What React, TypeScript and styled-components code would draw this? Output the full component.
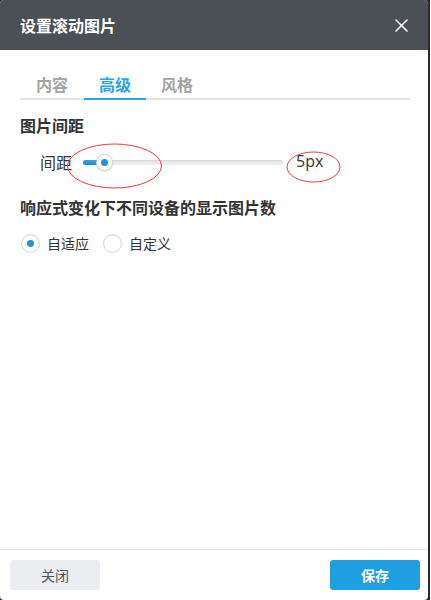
import React from "react";
import styled, { createGlobalStyle } from "styled-components";

const Global = createGlobalStyle`
  html, body { margin: 0; padding: 0; background: #ffffff; }
  body { font-family: "Noto Sans CJK SC", "Noto Sans", sans-serif; }
  * { box-sizing: border-box; }
`;

const Frame = styled.div`
  width: 430px;
  height: 600px;
  display: flex;
  background: #2e2a27;
  position: relative;
`;

const Dialog = styled.div`
  width: 428px;
  height: 600px;
  display: flex;
  flex-direction: column;
  background: #ffffff;
  border-radius: 4px;
  overflow: hidden;
`;

const Header = styled.div`
  height: 50px;
  flex: none;
  background: #4b4f56;
  display: flex;
  align-items: center;
  justify-content: space-between;
  padding: 0 20px 0 20px;
`;

const Title = styled.div`
  color: #ffffff;
  font-size: 16px;
  font-weight: 700;
  line-height: 20px;
`;

const CloseBtn = styled.button`
  width: 14px;
  height: 14px;
  padding: 0;
  border: 0;
  background: transparent;
  display: flex;
  align-items: center;
  justify-content: center;
  cursor: pointer;
`;

const Body = styled.div`
  flex: 1;
  padding: 20px 18px 0 20px;
  display: flex;
  flex-direction: column;
`;

const TabBar = styled.div`
  display: flex;
  border-bottom: 2px solid #e4e4e4;
  height: 30px;
`;

const Tab = styled.div<{ $active?: boolean }>`
  padding: 0 15px;
  height: 30px;
  line-height: 28px;
  font-size: 16px;
  font-weight: 700;
  color: ${(p) => (p.$active ? "#2aa3e4" : "#a3a3a3")};
  border-bottom: 2px solid ${(p) => (p.$active ? "#2aa3e4" : "transparent")};
  margin-bottom: -2px;

  &:first-child {
    margin-left: 2px;
    padding-left: 14px;
    padding-right: 16px;
  }
`;

const SectionTitle = styled.div<{ $mt: number }>`
  margin-top: ${(p) => p.$mt}px;
  font-size: 16px;
  font-weight: 700;
  line-height: 20px;
  color: #333333;
`;

const SliderRow = styled.div`
  margin-top: 12px;
  height: 30px;
  display: flex;
  align-items: center;
  padding-left: 20px;
`;

const Label = styled.div`
  font-size: 16px;
  color: #333333;
  line-height: 20px;
  width: 43px;
`;

const Track = styled.div`
  position: relative;
  width: 200px;
  height: 5px;
  border-radius: 3px;
  background: linear-gradient(#e2e2e2, #f0f0f0);
  box-shadow: inset 0 1px 1px rgba(0, 0, 0, 0.06);
`;

const Fill = styled.div`
  position: absolute;
  left: 0;
  top: 0;
  bottom: 0;
  border-radius: 3px;
  background: linear-gradient(#3aa6e6, #1a8fd6);
`;

const Thumb = styled.div`
  position: absolute;
  top: 50%;
  width: 17px;
  height: 17px;
  margin-left: -8px;
  margin-top: -8px;
  border-radius: 50%;
  background: #ffffff;
  border: 1px solid #d4d4d4;
  box-shadow: 0 1px 2px rgba(0, 0, 0, 0.12);
  display: flex;
  align-items: center;
  justify-content: center;

  &::after {
    content: "";
    width: 7px;
    height: 7px;
    border-radius: 50%;
    background: #1e94dc;
  }
`;

const Value = styled.div`
  margin-left: 13px;
  font-family: "Open Sans", "Noto Sans", sans-serif;
  font-size: 16px;
  color: #333333;
  line-height: 20px;
  margin-top: -2px;
`;

const RadioRow = styled.div`
  margin-top: 16px;
  height: 20px;
  display: flex;
  align-items: center;
  padding-left: 1px;
`;

const RadioItem = styled.label`
  display: flex;
  align-items: center;
  gap: 7px;
  margin-right: 14px;
  font-size: 14px;
  color: #333333;
`;

const RadioCircle = styled.span<{ $checked?: boolean }>`
  width: 19px;
  height: 19px;
  border-radius: 50%;
  border: 1px solid #d6d6d6;
  background: #ffffff;
  box-shadow: inset 0 1px 2px rgba(0, 0, 0, 0.06);
  display: flex;
  align-items: center;
  justify-content: center;

  &::after {
    content: "";
    width: 7px;
    height: 7px;
    border-radius: 50%;
    background: ${(p) => (p.$checked ? "#1e94dc" : "transparent")};
  }
`;

const Footer = styled.div`
  height: 51px;
  flex: none;
  border-top: 1px solid #e6e6e6;
  display: flex;
  align-items: center;
  justify-content: space-between;
  padding: 0 8px 0 10px;
`;

const Button = styled.button<{ $primary?: boolean }>`
  width: 90px;
  height: 30px;
  border: 0;
  border-radius: 3px;
  font-family: "Noto Sans CJK SC", "Noto Sans", sans-serif;
  font-size: 14px;
  font-weight: ${(p) => (p.$primary ? 700 : 400)};
  color: ${(p) => (p.$primary ? "#ffffff" : "#555555")};
  background: ${(p) => (p.$primary ? "#1f9fe1" : "#ecedf1")};
  cursor: pointer;
`;

const Annotation = styled.svg`
  position: absolute;
  left: 0;
  top: 0;
  pointer-events: none;
`;

export default function App() {
  const pct = 10.5;
  return (
    <>
      <Global />
      <Frame>
        <Dialog>
          <Header>
            <Title>设置滚动图片</Title>
            <CloseBtn aria-label="close">
              <svg width="13" height="13" viewBox="0 0 13 13">
                <path d="M1 1 L12 12 M12 1 L1 12" stroke="#ffffff" strokeWidth="1.6" strokeLinecap="round" />
              </svg>
            </CloseBtn>
          </Header>
          <Body>
            <TabBar>
              <Tab>内容</Tab>
              <Tab $active>高级</Tab>
              <Tab>风格</Tab>
            </TabBar>
            <SectionTitle $mt={15}>图片间距</SectionTitle>
            <SliderRow>
              <Label>间距</Label>
              <Track>
                <Fill style={{ width: `${pct}%` }} />
                <Thumb style={{ left: `${pct}%` }} />
              </Track>
              <Value>5px</Value>
            </SliderRow>
            <SectionTitle $mt={20}>响应式变化下不同设备的显示图片数</SectionTitle>
            <RadioRow>
              <RadioItem>
                <RadioCircle $checked />
                自适应
              </RadioItem>
              <RadioItem>
                <RadioCircle />
                自定义
              </RadioItem>
            </RadioRow>
          </Body>
          <Footer>
            <Button>关闭</Button>
            <Button $primary>保存</Button>
          </Footer>
        </Dialog>
        <Annotation width="430" height="600" viewBox="0 0 430 600">
          <ellipse cx="114.5" cy="166" rx="47" ry="22" fill="none" stroke="#ec3b3b" strokeWidth="1" />
          <ellipse cx="313.5" cy="167" rx="26.5" ry="15" fill="none" stroke="#ec3b3b" strokeWidth="1" />
        </Annotation>
      </Frame>
    </>
  );
}
